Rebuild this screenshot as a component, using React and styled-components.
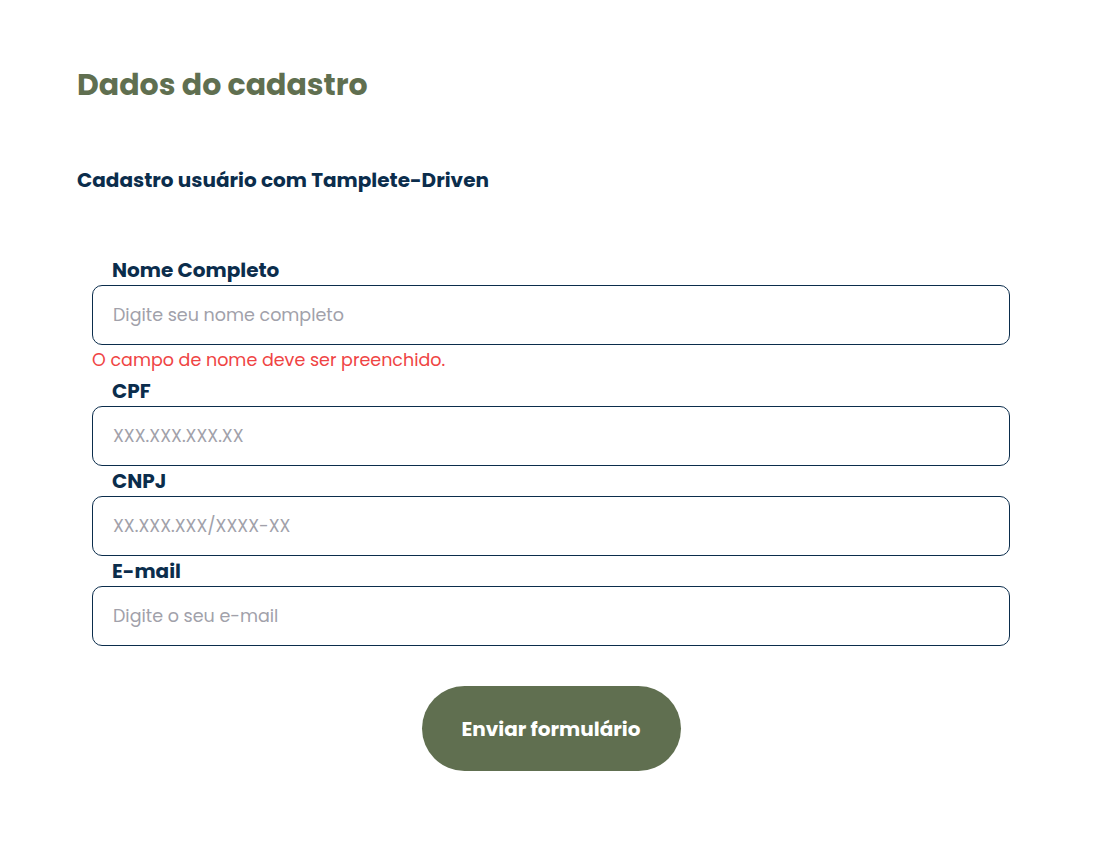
import styled, { createGlobalStyle } from 'styled-components'

const GlobalStyle = createGlobalStyle`
  * {
    box-sizing: border-box;
  }

  body {
    margin: 0;
    background-color: #ffffff;
    font-family: 'Poppins', 'Open Sans', sans-serif;
  }
`;

const Page = styled.main`
  padding: 57px 77px 60px;
`;

const Title = styled.h1`
  margin: 0;
  height: 56px;
  line-height: 56px;
  font-size: 30px;
  font-weight: 700;
  color: #606f50;
`;

const Subtitle = styled.h2`
  margin: 51px 0 0;
  height: 32px;
  line-height: 32px;
  font-size: 20px;
  font-weight: 700;
  color: #0b2d4c;
`;

const Form = styled.form`
  display: flex;
  flex-direction: column;
  margin-top: 59px;
  padding: 0 14px 0 15px;
`;

const Field = styled.div`
  display: flex;
  flex-direction: column;
`;

const Label = styled.label`
  height: 30px;
  line-height: 30px;
  padding-left: 20px;
  font-size: 20px;
  font-weight: 700;
  color: #0b2d4c;
`;

const Input = styled.input`
  width: 100%;
  height: 60px;
  padding: 0 20px;
  border: 1px solid #0b2d4c;
  border-radius: 10px;
  font-family: inherit;
  font-size: 17.5px;
  color: #0b2d4c;
  outline: none;

  &::placeholder {
    color: #a1a1aa;
  }
`;

const ErrorText = styled.span`
  height: 31px;
  line-height: 31px;
  font-size: 17.5px;
  color: #ef4444;
`;

const Submit = styled.button`
  align-self: center;
  width: 259px;
  height: 85px;
  margin-top: 40px;
  border: none;
  border-radius: 43px;
  background-color: #606f50;
  font-family: inherit;
  font-size: 20px;
  font-weight: 700;
  color: #ffffff;
  cursor: pointer;
`;

const fields = [
  { id: 'nome', label: 'Nome Completo', placeholder: 'Digite seu nome completo', error: 'O campo de nome deve ser preenchido.' },
  { id: 'cpf', label: 'CPF', placeholder: 'XXX.XXX.XXX.XX' },
  { id: 'cnpj', label: 'CNPJ', placeholder: 'XX.XXX.XXX/XXXX-XX' },
  { id: 'email', label: 'E-mail', placeholder: 'Digite o seu e-mail' },
]

const App = () => {
  return (
    <>
      <GlobalStyle />
      <Page>
        <Title>Dados do cadastro</Title>
        <Subtitle>Cadastro usuário com Tamplete-Driven</Subtitle>
        <Form onSubmit={(e) => e.preventDefault()}>
          {fields.map((field) => (
            <Field key={field.id}>
              <Label htmlFor={field.id}>{field.label}</Label>
              <Input id={field.id} type="text" placeholder={field.placeholder} />
              {field.error && <ErrorText>{field.error}</ErrorText>}
            </Field>
          ))}
          <Submit type="submit">Enviar formulário</Submit>
        </Form>
      </Page>
    </>
  )
}

export default App
